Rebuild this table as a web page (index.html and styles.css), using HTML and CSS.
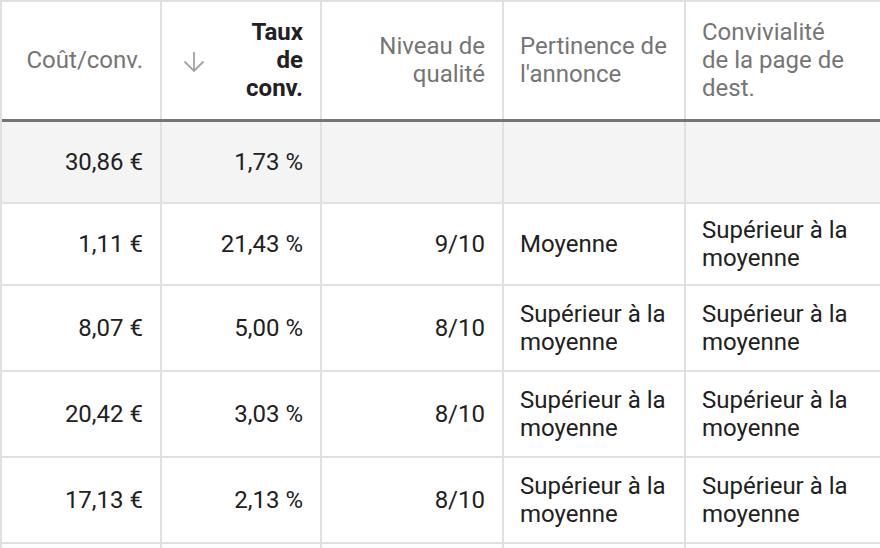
FILE: index.html
```html
<!DOCTYPE html>
<html lang="fr">
<head>
<meta charset="utf-8">
<title>Tableau</title>
<link rel="stylesheet" href="styles.css">
</head>
<body>
<div class="table">
  <div class="row head">
    <div class="cell num label">Coût/conv.</div>
    <div class="cell sorted">
      <svg class="sort-icon" width="22" height="22" viewBox="0 0 22 22" aria-hidden="true">
        <path d="M11 1V20M1.5 10.5L11 20L20.5 10.5" fill="none" stroke="currentColor" stroke-width="1.8"/>
      </svg>
      <span class="label strong">Taux<br>de<br>conv.</span>
    </div>
    <div class="cell num label">Niveau de qualité</div>
    <div class="cell text label"><span class="wrap">Pertinence de l'annonce</span></div>
    <div class="cell text label"><span class="wrap">Convivialité de la page de dest.</span></div>
  </div>

  <div class="row total">
    <div class="cell num">30,86 €</div>
    <div class="cell num">1,73 %</div>
    <div class="cell num"></div>
    <div class="cell text"></div>
    <div class="cell text"></div>
  </div>

  <div class="row short">
    <div class="cell num">1,11 €</div>
    <div class="cell num">21,43 %</div>
    <div class="cell num">9/10</div>
    <div class="cell text"><span class="wrap">Moyenne</span></div>
    <div class="cell text"><span class="wrap">Supérieur à la moyenne</span></div>
  </div>

  <div class="row">
    <div class="cell num">8,07 €</div>
    <div class="cell num">5,00 %</div>
    <div class="cell num">8/10</div>
    <div class="cell text"><span class="wrap">Supérieur à la moyenne</span></div>
    <div class="cell text"><span class="wrap">Supérieur à la moyenne</span></div>
  </div>

  <div class="row">
    <div class="cell num">20,42 €</div>
    <div class="cell num">3,03 %</div>
    <div class="cell num">8/10</div>
    <div class="cell text"><span class="wrap">Supérieur à la moyenne</span></div>
    <div class="cell text"><span class="wrap">Supérieur à la moyenne</span></div>
  </div>

  <div class="row">
    <div class="cell num">17,13 €</div>
    <div class="cell num">2,13 %</div>
    <div class="cell num">8/10</div>
    <div class="cell text"><span class="wrap">Supérieur à la moyenne</span></div>
    <div class="cell text"><span class="wrap">Supérieur à la moyenne</span></div>
  </div>

  <div class="row">
    <div class="cell num"></div>
    <div class="cell num"></div>
    <div class="cell num"></div>
    <div class="cell text"></div>
    <div class="cell text"></div>
  </div>
</div>
</body>
</html>
```
FILE: styles.css
```css
html, body {
  margin: 0;
  padding: 0;
  background: #ffffff;
  overflow: hidden;
}

body {
  font-family: Roboto, "Liberation Sans", Arial, sans-serif;
  font-size: 24px;
  line-height: 28px;
  color: #212121;
}

.table {
  width: 880px;
  background: #e0e0e0;
  border-top: 2px solid #e0e0e0;
  padding-left: 2px;
  box-sizing: border-box;
}

.row {
  display: grid;
  grid-template-columns: 158px 158px 180px 180px 1fr;
  column-gap: 2px;
  height: 84px;
  border-bottom: 2px solid #e0e0e0;
}

.row.head {
  height: 117px;
  border-bottom: 3px solid #757575;
}

.row.short,
.row.total {
  height: 80px;
}

.cell {
  background: #ffffff;
  display: flex;
  align-items: center;
  padding: 0 17px 0 16px;
  min-width: 0;
}

.total .cell {
  background: #f4f4f4;
}

.cell.num {
  justify-content: flex-end;
  text-align: right;
}

.cell.text {
  justify-content: flex-start;
  text-align: left;
  padding-right: 4px;
}

.wrap {
  max-width: 150px;
}

.label {
  color: #757575;
}

.head .cell {
  padding-bottom: 2px;
}

.label.strong {
  color: #212121;
  font-weight: 700;
  text-align: right;
}

.cell.sorted {
  justify-content: space-between;
  padding-left: 21px;
}

.sort-icon {
  color: #a3a3a3;
  flex: none;
  margin-top: 4px;
}
```
